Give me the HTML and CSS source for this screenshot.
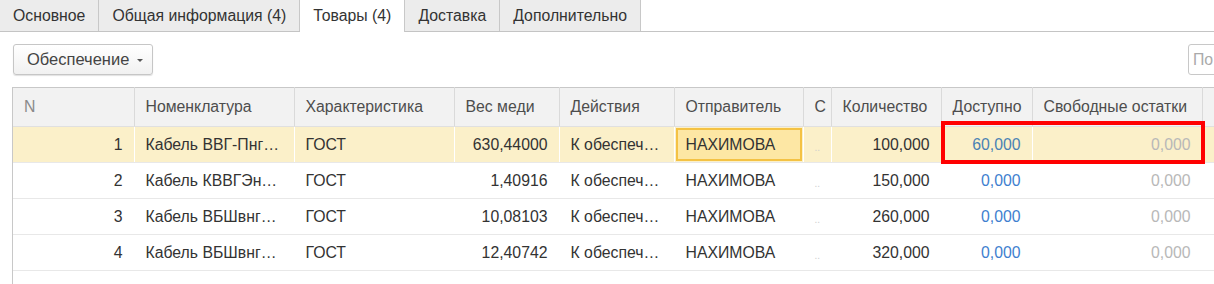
FILE: index.html
```html
<!DOCTYPE html>
<html lang="ru">
<head>
    <meta charset="UTF-8">
    <title>Товары</title>
    <link rel="stylesheet" href="styles.css">
</head>
<body>

    <div class="tabs">
        <div class="tab">Основное</div>
        <div class="tab">Общая информация (4)</div>
        <div class="tab active">Товары (4)</div>
        <div class="tab">Доставка</div>
        <div class="tab">Дополнительно</div>
    </div>

    <div class="toolbar">
        <button class="menu-button">Обеспечение <span class="arrow"></span></button>
        <div class="search">По</div>
    </div>

    <div class="grid">
        <table>
            <colgroup>
                <col style="width:121px">
                <col style="width:160px">
                <col style="width:160px">
                <col style="width:105px">
                <col style="width:115px">
                <col style="width:129px">
                <col style="width:28px">
                <col style="width:110px">
                <col style="width:91px">
                <col style="width:170px">
                <col style="width:40px">
            </colgroup>
            <thead>
                <tr>
                    <th class="col-n">N</th>
                    <th>Номенклатура</th>
                    <th>Характеристика</th>
                    <th>Вес меди</th>
                    <th>Действия</th>
                    <th>Отправитель</th>
                    <th>С</th>
                    <th>Количество</th>
                    <th>Доступно</th>
                    <th>Свободные остатки</th>
                    <th></th>
                </tr>
            </thead>
            <tbody>
                <tr class="selected">
                    <td class="num">1</td>
                    <td>Кабель ВВГ-Пнг…</td>
                    <td>ГОСТ</td>
                    <td class="num">630,44000</td>
                    <td>К обеспеч…</td>
                    <td class="focus"><span>НАХИМОВА</span></td>
                    <td class="dots">..</td>
                    <td class="num">100,000</td>
                    <td class="num avail">60,000</td>
                    <td class="num free">0,000</td>
                    <td></td>
                </tr>
                <tr>
                    <td class="num">2</td>
                    <td>Кабель КВВГЭн…</td>
                    <td>ГОСТ</td>
                    <td class="num">1,40916</td>
                    <td>К обеспеч…</td>
                    <td>НАХИМОВА</td>
                    <td class="dots">..</td>
                    <td class="num">150,000</td>
                    <td class="num avail">0,000</td>
                    <td class="num free">0,000</td>
                    <td></td>
                </tr>
                <tr>
                    <td class="num">3</td>
                    <td>Кабель ВБШвнг…</td>
                    <td>ГОСТ</td>
                    <td class="num">10,08103</td>
                    <td>К обеспеч…</td>
                    <td>НАХИМОВА</td>
                    <td class="dots">..</td>
                    <td class="num">260,000</td>
                    <td class="num avail">0,000</td>
                    <td class="num free">0,000</td>
                    <td></td>
                </tr>
                <tr>
                    <td class="num">4</td>
                    <td>Кабель ВБШвнг…</td>
                    <td>ГОСТ</td>
                    <td class="num">12,40742</td>
                    <td>К обеспеч…</td>
                    <td>НАХИМОВА</td>
                    <td class="dots">..</td>
                    <td class="num">320,000</td>
                    <td class="num avail">0,000</td>
                    <td class="num free">0,000</td>
                    <td></td>
                </tr>
            </tbody>
        </table>
        <div class="highlight"></div>
    </div>

</body>
</html>
```

FILE: styles.css
```css
body {
    font-family: "Liberation Sans", Arial, sans-serif;
    font-size: 15.8px;
    line-height: 18px;
    color: #333;
    margin: 0;
    padding: 0;
    background-color: #fff;
    overflow: hidden;
}

/* Вкладки */
.tabs {
    display: flex;
    height: 31px;
    border-bottom: 1px solid #c4c4c4;
}

.tab {
    display: flex;
    align-items: center;
    padding: 0 13px;
    background-color: #ececec;
    border-right: 1px solid #c8c8c8;
    color: #333;
}

.tab.active {
    background-color: #fff;
    height: 32px;
    position: relative;
    z-index: 1;
}

/* Панель с кнопкой */
.toolbar {
    display: flex;
    justify-content: space-between;
    align-items: center;
    padding: 12px 0 0 13px;
    height: 31px;
}

.menu-button {
    font-family: inherit;
    font-size: 16.5px;
    color: #444;
    height: 31px;
    width: 140px;
    padding: 0 0 0 13px;
    text-align: left;
    white-space: nowrap;
    border: 1px solid #c6c6c6;
    border-radius: 3px;
    background: linear-gradient(#ffffff, #f1f1f1);
    box-shadow: 0 1px 1px rgba(0, 0, 0, 0.12);
}

.arrow {
    display: inline-block;
    width: 0;
    height: 0;
    margin-left: 3px;
    vertical-align: middle;
    border-left: 3px solid transparent;
    border-right: 3px solid transparent;
    border-top: 3px solid #555;
}

.search {
    width: 40px;
    height: 29px;
    margin-right: -20px;
    border: 1px solid #c8c8c8;
    border-radius: 3px;
    color: #aaa;
    line-height: 29px;
    padding-left: 4px;
}

/* Таблица */
.grid {
    position: relative;
    margin: 12px 0 0 12px;
    border-left: 1px solid #c8c8c8;
    height: 200px;
}

table {
    border-collapse: collapse;
    table-layout: fixed;
    width: 1229px;
}

th {
    height: 38px;
    background-color: #f2f2f2;
    border-top: 1px solid #c8c8c8;
    border-right: 1px solid #dadada;
    border-bottom: 1px solid #e0e0e0;
    font-weight: normal;
    color: #4d4d4d;
    text-align: left;
    padding: 0 11px;
    white-space: nowrap;
    overflow: hidden;
}

th.col-n {
    color: #8a8a8a;
}

td {
    height: 35px;
    padding: 0 11px;
    border-right: 1px solid #fff;
    border-bottom: 1px solid #e8e8e8;
    white-space: nowrap;
    overflow: hidden;
}

td.num {
    text-align: right;
}

td.dots {
    height: 29px;
    color: #cfcfcf;
    font-size: 10px;
    line-height: 12px;
    padding: 6px 0 0 11px;
}

td.avail {
    color: #3f7fcf;
}

td.free {
    color: #b8b8b8;
}

tr.selected td {
    background-color: #fbf0c9;
}

tr.selected td.avail {
    color: #4a82b4;
}

tr.selected td.focus {
    padding: 0 1px;
}

tr.selected td.focus span {
    display: block;
    height: 29px;
    line-height: 29px;
    padding-left: 8px;
    background-color: #fde7a4;
    border: 2px solid #f4c244;
}

.highlight {
    position: absolute;
    left: 928px;
    top: 34px;
    width: 256px;
    height: 35px;
    border: 4px solid #ff0000;
}
```
